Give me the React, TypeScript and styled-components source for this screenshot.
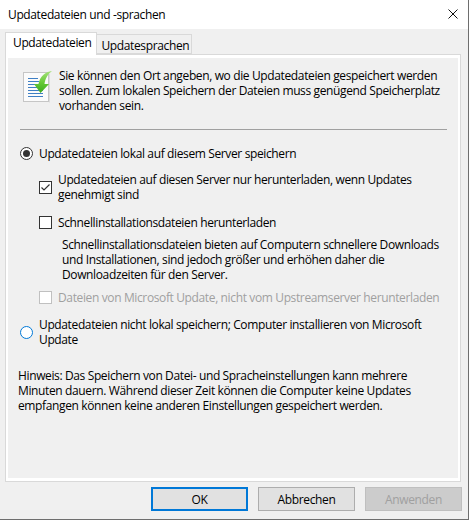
import React from "react";
import styled, { createGlobalStyle } from "styled-components";

const GlobalStyle = createGlobalStyle`
  html, body {
    margin: 0;
    padding: 0;
    background: #fff;
  }
  body {
    font-family: "Open Sans", "Noto Sans", sans-serif;
    font-size: 12px;
    line-height: 15px;
    color: #000;
    letter-spacing: -0.37px;
    white-space: nowrap;
  }
`;

const Dialog = styled.div`
  box-sizing: border-box;
  width: 469px;
  height: 520px;
  background: #f0f0f0;
  border-right: 1px solid #6e6e6e;
  border-bottom: 1px solid #6e6e6e;
  display: flex;
  flex-direction: column;
`;

const TitleBar = styled.div`
  height: 29px;
  flex: none;
  box-sizing: border-box;
  background: #fff;
  display: flex;
  align-items: center;
  justify-content: space-between;
  padding: 0 10px 1px 8px;
`;

const Body = styled.div`
  flex: 1;
  min-height: 0;
  padding: 4px 6px 0 5px;
  display: flex;
  flex-direction: column;
`;

const TabStrip = styled.div`
  height: 21px;
  flex: none;
  display: flex;
  align-items: flex-end;
  position: relative;
  z-index: 1;
`;

const Tab = styled.div<{ $active?: boolean }>`
  box-sizing: border-box;
  height: ${(p) => (p.$active ? "23px" : "20px")};
  margin-bottom: ${(p) => (p.$active ? "-1px" : "0")};
  padding: ${(p) => (p.$active ? "2px 5px 0 7px" : "3px 2px 0 4px")};
  background: ${(p) => (p.$active ? "#fff" : "#f0f0f0")};
  border: 1px solid #d9d9d9;
  border-bottom: ${(p) => (p.$active ? "none" : "1px solid #d9d9d9")};
  border-left: ${(p) => (p.$active ? "1px solid #d9d9d9" : "none")};
`;

const TabPanel = styled.div`
  box-sizing: border-box;
  width: 456px;
  height: 428px;
  flex: none;
  border: 1px solid #d9d9d9;
  padding: 3px 2px;
  background: #fff;
`;

const PanelInner = styled.div`
  box-sizing: border-box;
  height: 100%;
  background: #f0f0f0;
  padding: 10px 11px 0 12px;
`;

const Intro = styled.div`
  display: flex;
  gap: 4px;
  padding-left: 3px;
  height: 45px;
`;

const IntroIcon = styled.svg`
  width: 32px;
  height: 36px;
  flex: none;
`;

const Rule = styled.div`
  height: 1px;
  background: #a0a0a0;
  margin: 16px 0 16px;
`;

const OptionRow = styled.div<{ $indent?: number; $top?: number; $disabled?: boolean }>`
  display: flex;
  align-items: center;
  margin-left: ${(p) => p.$indent ?? 0}px;
  margin-top: ${(p) => p.$top ?? 0}px;
  color: ${(p) => (p.$disabled ? "#a0a0a0" : "#000")};
`;

const RadioMark = styled.span<{ $checked?: boolean; $focus?: boolean }>`
  box-sizing: border-box;
  width: 13px;
  height: 13px;
  flex: none;
  margin-right: 6px;
  border-radius: 50%;
  background: #fff;
  border: ${(p) => (p.$focus ? "1.5px solid #0078d7" : "1px solid #333")};
  display: flex;
  align-items: center;
  justify-content: center;

  &::after {
    content: "";
    width: 7px;
    height: 7px;
    border-radius: 50%;
    background: ${(p) => (p.$checked ? "#333" : "transparent")};
  }
`;

const CheckMark = styled.span<{ $disabled?: boolean }>`
  box-sizing: border-box;
  width: 13px;
  height: 13px;
  flex: none;
  margin-right: 6px;
  background: #fff;
  border: 1px solid ${(p) => (p.$disabled ? "#c0c0c0" : "#333")};
  display: flex;
  align-items: center;
  justify-content: center;
`;

const Description = styled.div`
  margin: 7px 0 0 42px;
`;

const Note = styled.div`
  margin: 21px 0 0 -2px;
`;

const ButtonRow = styled.div`
  flex: none;
  display: flex;
  justify-content: flex-end;
  gap: 10px;
  padding: 5px 0 0;
`;

const DialogButton = styled.button<{ $primary?: boolean }>`
  box-sizing: border-box;
  width: 97px;
  height: 24px;
  padding: 0;
  font: inherit;
  letter-spacing: inherit;
  color: ${(p) => (p.disabled ? "#a0a0a0" : "#000")};
  background: ${(p) => (p.disabled ? "#cccccc" : "#e1e1e1")};
  border: ${(p) => (p.$primary ? "2px solid #0078d7" : p.disabled ? "1px solid #bfbfbf" : "1px solid #adadad")};
`;

const DocumentIcon = () => (
  <IntroIcon viewBox="0 0 32 36">
    <defs>
      <linearGradient id="arrowGreen" x1="0" y1="0" x2="0" y2="1">
        <stop offset="0" stopColor="#a6e27a" />
        <stop offset="0.55" stopColor="#63c834" />
        <stop offset="1" stopColor="#3cab1e" />
      </linearGradient>
    </defs>
    <rect x="0.5" y="4.5" width="25" height="29" fill="#fbfbfb" stroke="#c6c6c6" />
    <line x1="26.5" y1="6" x2="26.5" y2="34.5" stroke="#dcdcdc" />
    <g stroke="#3f7fc4" strokeWidth="1">
      <line x1="5" y1="10.5" x2="15" y2="10.5" />
      <line x1="5" y1="13.5" x2="16" y2="13.5" />
      <line x1="5" y1="16.5" x2="16" y2="16.5" />
      <line x1="5" y1="19.5" x2="18" y2="19.5" />
      <line x1="5" y1="22.5" x2="20" y2="22.5" />
      <line x1="5" y1="25.5" x2="20" y2="25.5" />
      <line x1="5" y1="28.5" x2="20" y2="28.5" />
    </g>
    <path
      d="M29 3C22 4 17 8 15.5 16H11L17.5 25L26 16H21.5C22 11 25 6 29 3Z"
      fill="url(#arrowGreen)"
    />
  </IntroIcon>
);

const CheckGlyph = () => (
  <svg width="11" height="11" viewBox="0 0 11 11">
    <path d="M1.5 5.5L4 8L9.5 2.5" fill="none" stroke="#333" strokeWidth="1.2" />
  </svg>
);

const CloseGlyph = () => (
  <svg width="10" height="10" viewBox="0 0 10 10">
    <path d="M0.5 0.5L9.5 9.5M9.5 0.5L0.5 9.5" fill="none" stroke="#111" strokeWidth="1" />
  </svg>
);

export default function App() {
  return (
    <>
      <GlobalStyle />
      <Dialog>
        <TitleBar>
          <span>Updatedateien und -sprachen</span>
          <CloseGlyph />
        </TitleBar>
        <Body>
          <TabStrip>
            <Tab $active>Updatedateien</Tab>
            <Tab>Updatesprachen</Tab>
          </TabStrip>
          <TabPanel>
            <PanelInner>
              <Intro>
                <DocumentIcon />
                <div>
                  Sie können den Ort angeben, wo die Updatedateien gespeichert werden
                  <br />
                  sollen. Zum lokalen Speichern der Dateien muss genügend Speicherplatz
                  <br />
                  vorhanden sein.
                </div>
              </Intro>
              <Rule />
              <OptionRow>
                <RadioMark $checked />
                Updatedateien lokal auf diesem Server speichern
              </OptionRow>
              <OptionRow $indent={19} $top={11}>
                <CheckMark>
                  <CheckGlyph />
                </CheckMark>
                <div>
                  Updatedateien auf diesen Server nur herunterladen, wenn Updates
                  <br />
                  genehmigt sind
                </div>
              </OptionRow>
              <OptionRow $indent={19} $top={13}>
                <CheckMark />
                Schnellinstallationsdateien herunterladen
              </OptionRow>
              <Description>
                Schnellinstallationsdateien bieten auf Computern schnellere Downloads
                <br />
                und Installationen, sind jedoch größer und erhöhen daher die
                <br />
                Downloadzeiten für den Server.
              </Description>
              <OptionRow $indent={19} $top={8} $disabled>
                <CheckMark $disabled />
                Dateien von Microsoft Update, nicht vom Upstreamserver herunterladen
              </OptionRow>
              <OptionRow $top={12}>
                <RadioMark $focus />
                <div>
                  Updatedateien nicht lokal speichern; Computer installieren von Microsoft
                  <br />
                  Update
                </div>
              </OptionRow>
              <Note>
                Hinweis: Das Speichern von Datei- und Spracheinstellungen kann mehrere
                <br />
                Minuten dauern. Während dieser Zeit können die Computer keine Updates
                <br />
                empfangen können keine anderen Einstellungen gespeichert werden.
              </Note>
            </PanelInner>
          </TabPanel>
          <ButtonRow>
            <DialogButton $primary>OK</DialogButton>
            <DialogButton>Abbrechen</DialogButton>
            <DialogButton disabled>Anwenden</DialogButton>
          </ButtonRow>
        </Body>
      </Dialog>
    </>
  );
}
